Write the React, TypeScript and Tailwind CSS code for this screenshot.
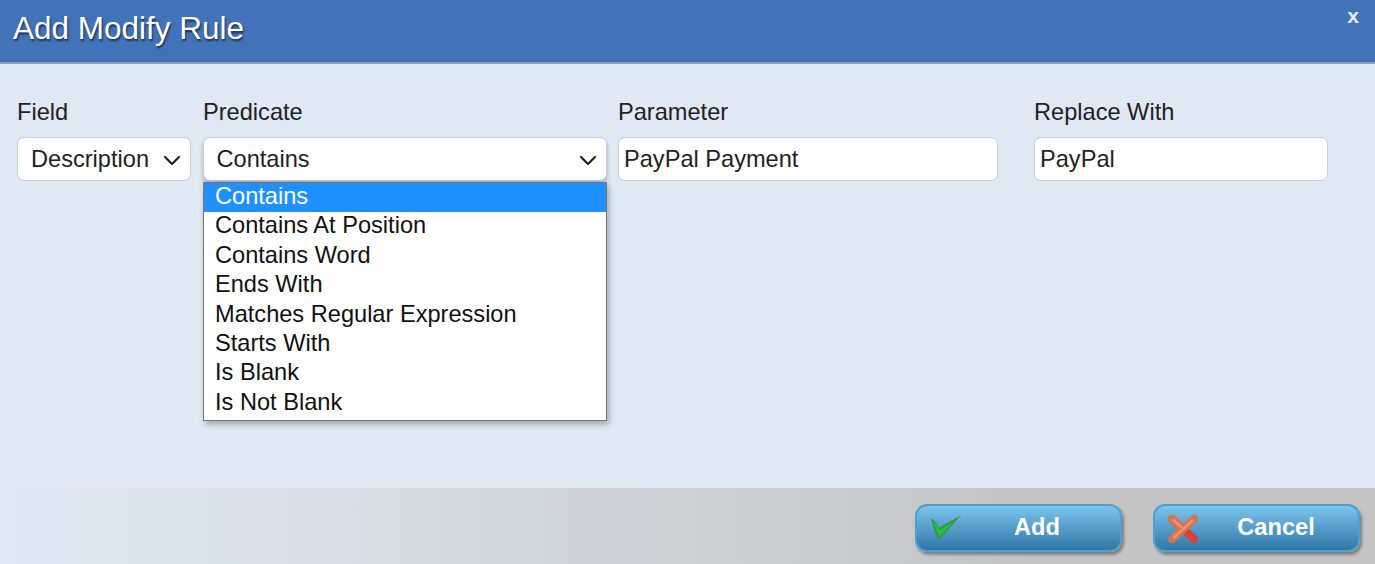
const predicates = [
  'Contains',
  'Contains At Position',
  'Contains Word',
  'Ends With',
  'Matches Regular Expression',
  'Starts With',
  'Is Blank',
  'Is Not Blank',
]

const Chevron = () => (
  <svg width="18" height="11" viewBox="0 0 18 11" fill="none" className="shrink-0">
    <path d="M2 2l7 7 7-7" stroke="#222" strokeWidth="2.2" strokeLinecap="round" strokeLinejoin="round" />
  </svg>
)

const CheckIcon = () => (
  <svg width="32" height="25" viewBox="0 0 32 25" className="shrink-0">
    <path d="M0.5 3 L6 7 L9 12.5 L31 0.5 L9 24.5 L6.5 21 Z" fill="#3f8f4a" />
    <path d="M3 5.5 L7.5 10 L10 15 L26 4.5 L9.5 21.5 L7 17 Z" fill="#16c936" />
  </svg>
)

const CrossIcon = () => (
  <svg width="30" height="28" viewBox="0 0 30 28" className="shrink-0">
    <path d="M4 4 L26 24" stroke="#d8423a" strokeWidth="8" strokeLinecap="round" />
    <path d="M26 4 L4 24" stroke="#d9744e" strokeWidth="8" strokeLinecap="round" />
    <path d="M4 4 L15 14" stroke="#d9744e" strokeWidth="8" strokeLinecap="round" />
    <path d="M24.5 5.5 L6 22.5" stroke="#e8946e" strokeWidth="2.5" strokeLinecap="round" />
    <path d="M5.5 5 L13 12" stroke="#e8946e" strokeWidth="2.5" strokeLinecap="round" />
  </svg>
)

const fieldClass =
  'h-[44px] pt-[2px] bg-white border border-[#c9cdd1] rounded-[7px] text-[23.6px] text-[#222] flex items-center'

const ActionButton = ({ icon, label, iconClass, labelClass }: { icon: React.ReactNode; label: string; iconClass: string; labelClass: string }) => (
  <div className="w-[207px] h-[48px] rounded-[12px] border-2 border-[#4f9fd0] bg-gradient-to-b from-[#7cc5ee] to-[#2e78a6] shadow-[2px_3px_3px_rgba(0,0,0,0.35)] flex items-center">
    <div className={iconClass}>{icon}</div>
    <div className={`flex-1 text-center text-white font-bold text-[23.6px] ${labelClass}`}>{label}</div>
  </div>
)

const App = () => {
  return (
    <div className="w-[1375px] h-[564px] overflow-hidden flex flex-col bg-[#dfe9f3] font-['Liberation_Sans',Arial,sans-serif]">
      <div className="h-[64px] shrink-0 bg-[#4273b8] border-b-2 border-[#8c9cb4] flex justify-between pl-[13px] pr-[16px]">
        <div className="text-[31.5px] leading-[57px] text-white [text-shadow:1px_2px_2px_rgba(0,0,0,0.6)]">Add Modify Rule</div>
        <div className="text-[21px] leading-[32px] font-bold text-[#e6edf6]">x</div>
      </div>

      <div className="flex-1 flex items-start pl-[17px] pt-[33px]">
        <div className="w-[174px] mr-[12px]">
          <div className="text-[23.6px] leading-[30px] text-[#222] mb-[10px]">Field</div>
          <div className={`${fieldClass} justify-between pl-[13px] pr-[9px]`}>
            <span>Description</span>
            <Chevron />
          </div>
        </div>

        <div className="w-[404px] mr-[11px] relative">
          <div className="text-[23.6px] leading-[30px] text-[#222] mb-[10px]">Predicate</div>
          <div className={`${fieldClass} justify-between pl-[12.5px] pr-[9px] shadow-[0_3px_4px_rgba(0,0,0,0.25)]`}>
            <span>Contains</span>
            <Chevron />
          </div>
          <div className="absolute left-0 top-[85px] w-[404px] h-[239px] bg-white border border-[#777] shadow-[2px_3px_6px_rgba(0,0,0,0.3)]">
            {predicates.map((item, i) => (
              <div
                key={item}
                className={`h-[29.4px] leading-[27px] pl-[11px] text-[23.6px] ${i === 0 ? 'bg-[#1e90ff] text-white' : 'text-[#111]'}`}
              >
                {item}
              </div>
            ))}
          </div>
        </div>

        <div className="w-[380px] mr-[36px]">
          <div className="text-[23.6px] leading-[30px] text-[#222] mb-[10px]">Parameter</div>
          <div className={`${fieldClass} pl-[5px]`}>PayPal Payment</div>
        </div>

        <div className="w-[294px]">
          <div className="text-[23.6px] leading-[30px] text-[#222] mb-[10px]">Replace With</div>
          <div className={`${fieldClass} pl-[5px]`}>PayPal</div>
        </div>
      </div>

      <div className="h-[76px] shrink-0 bg-gradient-to-r from-[#dfe9f3] to-[#c4c4c4] to-[75%] flex items-start justify-end pt-[16px] pr-[15px] gap-[31px]">
        <ActionButton icon={<CheckIcon />} label="Add" iconClass="ml-[13px] -mt-[2px]" labelClass="pr-[8px]" />
        <ActionButton icon={<CrossIcon />} label="Cancel" iconClass="ml-[13px] mt-[2px]" labelClass="pr-[4px]" />
      </div>
    </div>
  )
}

export default App
